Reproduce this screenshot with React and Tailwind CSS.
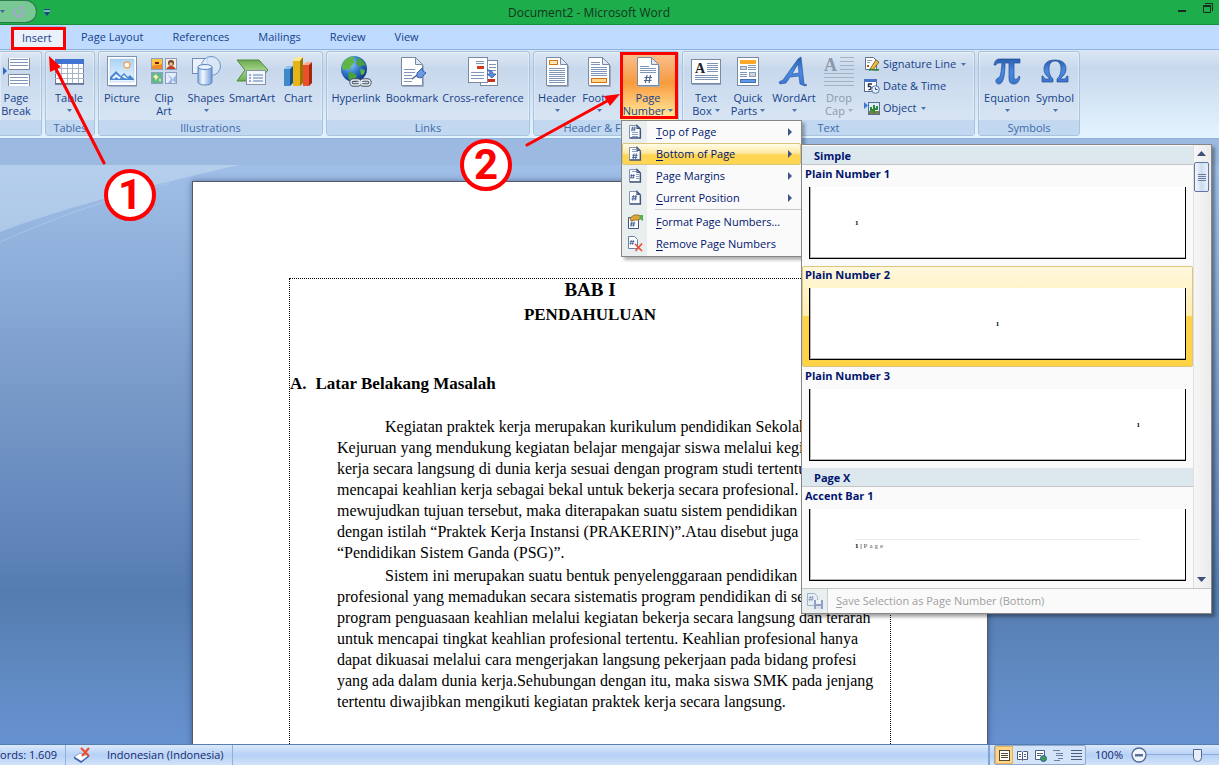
import React from "react";

const Caret = ({ className = "text-[#4a74ae]" }) => (
  <svg viewBox="0 0 5 3" className={`inline-block h-[3px] w-[5px] shrink-0 ${className}`} fill="currentColor" aria-hidden="true">
    <path d="M0 0h5L2.5 3z" />
  </svg>
);

const Svg = ({ children, size = "h-[32px] w-[32px]", box = "0 0 32 32" }) => (
  <svg viewBox={box} className={`${size} shrink-0`} fill="none" aria-hidden="true">
    {children}
  </svg>
);

const Lines = ({ x1, x2, ys, stroke = "#7f96b8" }) => (
  <path d={ys.map((y) => `M${x1} ${y}H${x2}`).join("")} stroke={stroke} strokeWidth="1" />
);

const Sheet = ({ x = 5, y = 1, w = 21, h = 29, fold = 7, stroke = "#7b8aa3" }) => (
  <g>
    <path d={`M${x + 1} ${y + h + 1}h${w}v-${h - fold}`} stroke="#9dabc0" strokeWidth="1" />
    <path d={`M${x} ${y}h${w - fold}l${fold} ${fold}v${h - fold}h-${w}z`} fill="#fff" stroke={stroke} />
    <path d={`M${x + w - fold} ${y}v${fold}h${fold}z`} fill="#dfe7f2" stroke={stroke} />
  </g>
);

const PageBreakIcon = () => (
  <Svg>
    <path d="M8.500 2v11.500h21V2" fill="#fff" stroke="#7b8ba6" />
    <Lines x1={10} x2={28} ys={[3.5, 6.5, 9.5]} />
    <path d="M8.500 30V18.500h21V30" fill="#fff" stroke="#7b8ba6" />
    <Lines x1={10} x2={28} ys={[21.5, 24.5, 27.5]} />
    <path d="M3 11v8l4-4z" fill="#2f69c8" />
  </Svg>
);

const TableIcon = () => (
  <Svg>
    <rect x="2.500" y="3.500" width="28" height="24" fill="#fff" stroke="#6d7f9f" />
    <rect x="2" y="3" width="29" height="5" fill="#3f74d4" />
    <path d="M2 12.500h29M2 17.500h29M2 22.500h29M8.500 8v20M14.500 8v20M19.500 8v20M25.500 8v20" stroke="#a7b3c8" />
    <path d="M2 28h29" stroke="#5d6f8f" strokeWidth="1.500" />
  </Svg>
);

const PictureIcon = () => (
  <Svg>
    <defs>
      <linearGradient id="sky" x1="0" y1="0" x2="0" y2="1">
        <stop offset="0" stopColor="#a9d3f5" />
        <stop offset="1" stopColor="#eaf6ff" />
      </linearGradient>
    </defs>
    <rect x="1.500" y="0.500" width="29" height="29" fill="#fff" stroke="#7a93b4" />
    <rect x="4" y="3" width="24" height="23" fill="url(#sky)" stroke="#a9c3e0" strokeWidth="0.500" />
    <circle cx="21" cy="9" r="3" fill="#fff" stroke="#f3a35c" strokeWidth="1.300" />
    <path d="M4 24v-3l6-6 5 5 3-3 4 4 2-2 4 4v1z" fill="#4a86cf" />
    <path d="M6 22l4-4 5 4-2 1-3-2-2 2zM16 21l2-2 4 4z" fill="#eef6ff" />
    <path d="M3 30.500h28" stroke="#a4b4ca" />
  </Svg>
);

const ClipArtIcon = () => (
  <Svg>
    <rect x="3.500" y="2.500" width="11" height="11" fill="#ffc33d" stroke="#8b9fc0" />
    <path d="M4 10c3-2 6 0 10-2v5H4z" fill="#ee8a2a" />
    <rect x="7" y="6" width="4" height="2" fill="#7a1c10" />
    <rect x="17.500" y="2.500" width="11" height="11" fill="#f7eadb" stroke="#8b9fc0" />
    <path d="M18.500 13c1-4 8-4 9 0z" fill="#c33b22" />
    <circle cx="23" cy="7" r="3" fill="#6d4630" />
    <circle cx="23" cy="8" r="1.700" fill="#f2c193" />
    <rect x="3.500" y="16.500" width="11" height="11" fill="#63b98a" stroke="#8b9fc0" />
    <path d="M6 20l2-2 1 2 2 1-2 1-1 3-1-3-2-1zM11 24l1-2 1 2-1 2z" fill="#fff0a8" />
    <rect x="17.500" y="16.500" width="11" height="11" fill="#e4ecfb" stroke="#8b9fc0" />
    <path d="M19 18l5 4v5h-4l3-4zM28 19l-4 5 4 3z" fill="#9db6e8" />
  </Svg>
);

const ShapesIcon = () => (
  <Svg>
    <defs>
      <linearGradient id="cyl" x1="0" x2="1" y1="0" y2="0">
        <stop offset="0" stopColor="#8fb4e6" />
        <stop offset="0.350" stopColor="#f3f9ff" />
        <stop offset="1" stopColor="#6d99d9" />
      </linearGradient>
    </defs>
    <rect x="2.500" y="2.500" width="15" height="15" fill="#e9f2fd" stroke="#6f8db8" />
    <circle cx="21" cy="10" r="9.500" fill="#dbe9fa" fillOpacity="0.800" stroke="#6f94c8" />
    <path d="M8 11v15c0 4 14 4 14 0V11z" fill="url(#cyl)" stroke="#5d84bb" />
    <ellipse cx="15" cy="11" rx="7" ry="2.500" fill="#e9f3ff" stroke="#5d84bb" />
  </Svg>
);

const SmartArtIcon = () => (
  <Svg>
    <defs>
      <linearGradient id="smart" x1="0" y1="0" x2="0" y2="1">
        <stop offset="0" stopColor="#6aa84f" />
        <stop offset="0.500" stopColor="#a5d488" />
        <stop offset="1" stopColor="#6aad4c" />
      </linearGradient>
    </defs>
    <path d="M1 4h22l9 10-9 11H1l8-11z" fill="url(#smart)" stroke="#508a3a" />
    <rect x="10.500" y="14.500" width="19" height="14" fill="#f3f6fa" stroke="#8493a8" />
    <path d="M13 19h2M13 22h2M13 25h2" stroke="#3f66a8" />
    <path d="M17 19h10M17 22h10M17 25h10" stroke="#5f7eb0" />
  </Svg>
);

const ChartIcon = () => (
  <Svg>
    <path d="M2 13l3-3h6l-2 3z" fill="#8cc4ee" />
    <path d="M2 13h6v17H2z" fill="#3f8acb" />
    <path d="M8 13l3-3v17l-3 3z" fill="#174f8c" />
    <path d="M11 5l3-4h7l-3 4z" fill="#ffe98a" />
    <path d="M11 5h7v25h-7z" fill="#e6b414" />
    <path d="M18 5l3-4v26l-3 3z" fill="#9a7405" />
    <path d="M21 9l3-3h6l-3 3z" fill="#ffab8e" />
    <path d="M21 9h6v21h-6z" fill="#e8512c" />
    <path d="M27 9l3-3v21l-3 3z" fill="#a32708" />
  </Svg>
);

const HyperlinkIcon = () => (
  <Svg>
    <defs>
      <radialGradient id="globe" cx="0.350" cy="0.300" r="0.750">
        <stop offset="0" stopColor="#9ad0f8" />
        <stop offset="0.550" stopColor="#2c73c8" />
        <stop offset="1" stopColor="#0c3478" />
      </radialGradient>
    </defs>
    <circle cx="14" cy="13" r="13" fill="url(#globe)" />
    <path d="M4 5c3-4 8-5 11-4l-2 3 2 2-4 4-1 4-3-1-4 1c-2-3-1-6 1-9z" fill="#5fb548" />
    <path d="M18 2c4 1 7 5 8 8l-3-1-4 2-3-4zM9 16l5 1 3 3-4 6c-4-1-6-5-4-10z" fill="#48a13c" />
    <path d="M20 13l5 1-1 4-3 1z" fill="#58b14a" />
    <g stroke="#4d5866" strokeWidth="3.400">
      <rect x="11" y="24" width="9" height="5" rx="2.500" />
      <rect x="21" y="24" width="9" height="5" rx="2.500" />
      <path d="M17 26.500h7" />
    </g>
    <g stroke="#e3e8ee" strokeWidth="1.400">
      <rect x="11" y="24" width="9" height="5" rx="2.500" />
      <rect x="21" y="24" width="9" height="5" rx="2.500" />
      <path d="M17 26.500h7" />
    </g>
  </Svg>
);

const BookmarkIcon = () => (
  <Svg>
    <Sheet x={5.5} y={1.5} w={21} h={28} />
    <Lines x1={8} x2={19} ys={[13.5, 16.5]} />
    <Lines x1={8} x2={16} ys={[19.5, 22.5, 25.5]} />
    <path d="M16 23l9-7" stroke="#51617e" strokeWidth="1.500" />
    <path d="M21 17l5-5 1 3 3 2-5 5-4-1z" fill="#6c98e0" stroke="#3462ad" />
  </Svg>
);

const CrossRefIcon = () => (
  <Svg>
    <rect x="13.500" y="4.500" width="17" height="25" fill="#fff" stroke="#7b8aa3" />
    <Lines x1={22} x2={29} ys={[8.5, 11.5, 14.5]} />
    <rect x="20" y="23" width="8" height="3" fill="#c8321c" />
    <rect x="1.500" y="1.500" width="19" height="25" fill="#fff" stroke="#7b8aa3" />
    <Lines x1={9} x2={17} ys={[5.5, 7.5]} />
    <rect x="10" y="10" width="7" height="3" fill="#d23a20" />
    <Lines x1={4} x2={17} ys={[16.5, 19.5, 22.5]} />
    <path d="M20 14c5 0 6 2 6 4h3l-4 4-5-4h3c0-2-1-3-3-4z" fill="#5b8fdd" stroke="#2a5ba8" strokeWidth="0.800" />
  </Svg>
);

const HeaderIcon = () => (
  <Svg>
    <Sheet x={5.5} y={1.5} w={21} h={28} />
    <rect x="8.500" y="4.500" width="8" height="4" fill="#ffe9b8" stroke="#d3740f" />
    <Lines x1={8} x2={24} ys={[12.5, 14.5, 16.5, 18.5, 20.5, 22.5, 24.5, 26.5]} />
  </Svg>
);

const FooterIcon = () => (
  <Svg>
    <Sheet x={5.5} y={1.5} w={21} h={28} />
    <Lines x1={8} x2={17} ys={[6.5, 8.5]} />
    <Lines x1={8} x2={24} ys={[11.5, 13.5, 15.5, 17.5, 19.5]} />
    <rect x="8.500" y="22.500" width="15" height="4" fill="#ffd58c" stroke="#d3740f" />
  </Svg>
);

const Hash = ({ x, y, s = 1, stroke = "#4a6289" }) => (
  <path transform={`translate(${x} ${y}) scale(${s})`} d="M3 0L1.500 8M6.500 0L5 8M0.500 2.500h7.500M0 5.500h7.500" stroke={stroke} strokeWidth="1.200" />
);

const PageNumberIcon = () => (
  <Svg>
    <Sheet x={5.5} y={1.5} w={21} h={28} />
    <Lines x1={8} x2={17} ys={[10.5]} />
    <Lines x1={8} x2={24} ys={[12.5, 14.5, 16.5]} />
    <Hash x={12} y={19} />
  </Svg>
);

const TextBoxIcon = () => (
  <Svg>
    <rect x="1.500" y="3.500" width="29" height="24" fill="#fff" stroke="#7b8aa3" />
    <text x="5" y="17" fontFamily="Liberation Serif, serif" fontWeight="700" fontSize="14" fill="#1d1d24">A</text>
    <Lines x1={17} x2={28} ys={[7.5, 9.5, 11.5, 13.5, 15.5]} />
    <Lines x1={5} x2={28} ys={[19.5, 21.5, 23.5]} />
    <path d="M2 28.500h29" stroke="#8ba0bd" />
  </Svg>
);

const QuickPartsIcon = () => (
  <Svg>
    <rect x="5.500" y="1.500" width="21" height="28" fill="#fff" stroke="#7b8aa3" />
    <rect x="8" y="4" width="16" height="4" fill="#ffa928" />
    <rect x="8.500" y="10.500" width="6" height="3" fill="#c9d4e4" stroke="#8d9db6" />
    <Lines x1={16} x2={24} ys={[9.5, 11.5, 13.5]} />
    <Lines x1={8} x2={15} ys={[16.5, 18.5, 20.5]} />
    <rect x="17.500" y="16.500" width="6" height="4" fill="#c9d4e4" stroke="#8d9db6" />
    <rect x="8.500" y="23.500" width="15" height="3" fill="#5f9be4" stroke="#3f70b6" />
  </Svg>
);

const BlueDefs = () => (
  <defs>
    <linearGradient id="bluetext" x1="0" y1="0" x2="0" y2="1">
      <stop offset="0" stopColor="#2a5fae" />
      <stop offset="0.500" stopColor="#4c8ae0" />
      <stop offset="1" stopColor="#3a76d0" />
    </linearGradient>
  </defs>
);

const WordArtIcon = () => (
  <Svg>
    <BlueDefs />
    <path d="M23 1L26 28l3 1-2 1-5-2-1-8-9 1-4 6-6 1-1-2 4-2L20 3z" fill="url(#bluetext)" stroke="#2a5aa6" strokeWidth="0.700" />
    <path d="M20 8l1 9-7 1z" fill="#d3e0f1" stroke="#2a5aa6" strokeWidth="0.700" />
  </Svg>
);

const DropCapIcon = () => (
  <Svg>
    <text x="1" y="15" fontFamily="Liberation Serif, serif" fontWeight="700" fontSize="18" fill="#8b98aa">A</text>
    <Lines x1={17} x2={31} ys={[1.5, 5.5, 9.5, 13.5]} stroke="#a5b0c0" />
    <Lines x1={1} x2={31} ys={[17.5, 21.5, 25.5, 29.5]} stroke="#a5b0c0" />
  </Svg>
);

const PiIcon = () => (
  <Svg>
    <BlueDefs />
    <path d="M3 9c1-5 3-6 6-6h20v4h-6v13c0 4 2 4 4 2l1-2 1 1c-1 5-3 7-6 7-4 0-5-2-5-7V7h-4c0 9-1 21-6 21-4 0-4-5-1-6 3-1 3-6 4-15-4 0-5 0-6 2z" fill="url(#bluetext)" stroke="#1f4f98" strokeWidth="0.700" />
  </Svg>
);

const OmegaIcon = () => (
  <Svg>
    <BlueDefs />
    <path d="M3 20h1l2 3h5c-3-3-6-5-6-10C5 7 9 4 16 4s11 3 11 9c0 5-3 7-6 10h5l2-3h1v6H18v-3c3-3 4-6 4-10 0-5-2-8-6-8s-6 3-6 8c0 4 1 7 4 10v3H3z" fill="url(#bluetext)" stroke="#1f4f98" strokeWidth="0.700" />
  </Svg>
);

const SmallSvg = ({ children }) => <Svg size="h-[16px] w-[16px]" box="0 0 16 16">{children}</Svg>;

const SignatureIcon = () => (
  <SmallSvg>
    <path d="M1.500 1.500h8l3 3v9h-11z" fill="#fff" stroke="#5e6f8c" />
    <path d="M3 4.500h5M3 6.500h3" stroke="#8fa0b8" />
    <path d="M3 9l2 2M5 9l-2 2" stroke="#c9472e" />
    <path d="M6 13l6-9 3 2-6 8z" fill="#f0b93a" stroke="#6b5220" strokeWidth="0.800" />
    <path d="M5 14.500c3-3 5 1 10-1" stroke="#2f7d35" strokeWidth="1.500" />
  </SmallSvg>
);

const DateIcon = () => (
  <SmallSvg>
    <rect x="0.500" y="1.500" width="12" height="12" fill="#fff" stroke="#516a96" />
    <rect x="0" y="1" width="13" height="3" fill="#4773c4" />
    <path d="M8 6H4.500v2.500c3-1 4 3 0 3.200" stroke="#24304a" strokeWidth="1.400" />
    <circle cx="11.500" cy="11.500" r="3.800" fill="#e4eefb" stroke="#5b77a8" />
    <path d="M11.500 9.500v2h2" stroke="#344d7d" />
  </SmallSvg>
);

const ObjectIcon = () => (
  <SmallSvg>
    <rect x="4.500" y="2.500" width="11" height="12" fill="#dcebf8" stroke="#566f96" />
    <path d="M5 14v-3h10v3z" fill="#7a7f45" />
    <path d="M10 13V5M7 7v3h3M13 6v3h-3" stroke="#2d8a36" strokeWidth="2" />
    <path d="M0 2v7l4-3.500z" fill="#3a78d8" />
  </SmallSvg>
);

const MiniSheet = ({ children, x = 2.5 }) => (
  <g>
    <path d={`M${x} 1.500h7.500l3 3v9h-10.500z`} fill="#fdfdff" stroke="#8293b3" />
    <path d={`M${x + 7.5} 1.500v3h3zM${x} 14.200h11v-9`} stroke="#41557c" strokeWidth="1.200" />
    {children}
  </g>
);

const TopIcon = () => (
  <SmallSvg>
    <MiniSheet>
      <Hash x={4} y={2.5} s={0.6} stroke="#2f4f86" />
      <path d="M5 8.500h6M5 10.500h6M5 12.500h6" stroke="#8b9fc2" />
    </MiniSheet>
  </SmallSvg>
);
const BottomIcon = () => (
  <SmallSvg>
    <MiniSheet>
      <path d="M5 3.500h4M5 5.500h6" stroke="#8b9fc2" />
      <Hash x={5} y={7.5} s={0.7} stroke="#2f4f86" />
    </MiniSheet>
  </SmallSvg>
);
const MarginIcon = () => (
  <SmallSvg>
    <MiniSheet>
      <Hash x={3} y={6} s={0.6} stroke="#2f4f86" />
      <path d="M9 6.500h3M9 8.500h3M9 10.500h3M5 3.500h4" stroke="#8b9fc2" />
    </MiniSheet>
  </SmallSvg>
);
const CurrentIcon = () => (
  <SmallSvg>
    <MiniSheet>
      <Hash x={4.5} y={5} s={0.7} stroke="#2f4f86" />
    </MiniSheet>
  </SmallSvg>
);
const FormatIcon = () => (
  <SmallSvg>
    <path d="M1.500 3.500h10v11h-10z" fill="#fdfdff" stroke="#41557c" />
    <Hash x={3} y={7.5} s={0.65} stroke="#2f4f86" />
    <path d="M3 4l4-3 5 0 2 2-2 3H8L4 7z" fill="#dba63a" stroke="#86631b" strokeWidth="0.800" />
    <path d="M12.500 1h3.500v6l-3.500-2z" fill="#59b04f" />
  </SmallSvg>
);
const RemoveIcon = () => (
  <SmallSvg>
    <path d="M1.500 0.500h6l3 3v9h-9z" fill="#fdfdff" stroke="#6c80a4" />
    <Hash x={2.5} y={4} s={0.6} stroke="#2f4f86" />
    <path d="M8 8l7 7M15 7.500L8.500 15" stroke="#ef4f35" strokeWidth="1.700" />
  </SmallSvg>
);
const SaveIcon = () => (
  <SmallSvg>
    <path d="M0.500 0.500h7l3 3v9h-10z" fill="#e9eef6" stroke="#a3b2cc" />
    <Hash x={1.5} y={3} s={0.65} stroke="#8296ba" />
    <rect x="7" y="7" width="9" height="9" fill="#8fa2c4" />
    <rect x="9" y="7" width="5" height="4" fill="#eef2f8" />
    <rect x="9" y="13" width="5" height="3" fill="#d9e0ec" />
  </SmallSvg>
);

const BigButton = ({ icon, lines, width, caret, disabled, className = "" }) => (
  <button
    type="button"
    disabled={disabled}
    className={`flex shrink-0 flex-col items-center whitespace-nowrap text-[11px] leading-[13px] ${width} ${disabled ? "text-[#8d99aa]" : "text-[#15428b]"} ${className}`}
  >
    {icon}
    <span className="mt-[3px]">{lines[0]}</span>
    <span className="flex h-[13px] items-center gap-[3px]">
      {lines[1]}
      {caret && <Caret className={disabled ? "text-[#a8b2bf]" : "text-[#4a74ae]"} />}
    </span>
  </button>
);

const Group = ({ label, width, children, className = "" }) => (
  <section
    className={`flex shrink-0 flex-col rounded-[3px] border border-[#a9c2de] bg-linear-to-b from-[#dce7f3] from-0% via-[#c8d8ec] via-20% to-[#dbe8f5] shadow-[inset_0_0_0_1px_rgba(255,255,255,0.35)] ${width} ${className}`}
  >
    <div className="flex flex-1 pl-[2px] pt-[4px]">{children}</div>
    <h2 className="h-[15px] overflow-hidden whitespace-nowrap bg-[#c1d8f0] text-center text-[11px] leading-[15px] text-[#3e6aaa]">{label}</h2>
  </section>
);

const SmallButton = ({ icon, label, caret }) => (
  <button type="button" className="flex h-[22px] items-center gap-[3px] whitespace-nowrap text-[11px] text-[#15428b]">
    {icon}
    <span>{label}</span>
    {caret && <Caret className="ml-[2px] text-[#4a74ae]" />}
  </button>
);

const menuItems = [
  { key: "T", rest: "op of Page", icon: <TopIcon />, sub: true },
  { key: "B", rest: "ottom of Page", icon: <BottomIcon />, sub: true, active: true },
  { key: "P", rest: "age Margins", icon: <MarginIcon />, sub: true },
  { key: "C", rest: "urrent Position", icon: <CurrentIcon />, sub: true },
  { key: "F", rest: "ormat Page Numbers...", icon: <FormatIcon />, divider: true },
  { key: "R", rest: "emove Page Numbers", icon: <RemoveIcon /> },
];

const Menu = () => (
  <div role="menu" className="absolute left-[621px] top-[120px] w-[181px] border border-[#868686] bg-[#fafafa] bg-linear-to-r from-[#e9eeee] from-[25px] to-[#fafafa] to-[25px] pb-px shadow-[3px_3px_3px_rgba(0,0,0,0.3)]">
    {menuItems.map((m) => (
      <React.Fragment key={m.key}>
        {m.divider && <div className="mb-px ml-[33px] h-px bg-[#c5c5c5]" />}
        <button
          type="button"
          role="menuitem"
          className={`flex h-[22px] w-full items-center border pl-[4px] pr-[8px] text-[11px] text-[#00156e] ${
            m.active ? "rounded-[2px] border-[#d8c47c] bg-linear-to-b from-[#fffce9] from-0% via-[#ffe9a0] via-45% to-[#ffd552] to-55%" : "border-transparent"
          }`}
        >
          {m.icon}
          <span className="ml-[13px] flex-1 whitespace-nowrap text-left">
            <span className="underline underline-offset-2">{m.key}</span>
            {m.rest}
          </span>
          {m.sub && (
            <svg viewBox="0 0 4 8" className="h-[8px] w-[4px]" fill="#3f5487" aria-hidden="true">
              <path d="M0 0l4 4-4 4z" />
            </svg>
          )}
        </button>
      </React.Fragment>
    ))}
  </div>
);

const GalleryHeading = ({ children }) => (
  <h3 className="h-[19px] border-b border-[#c5c5c5] bg-[#dde7ee] pl-[12px] text-[11px] font-bold leading-[19px] text-[#00156e]">{children}</h3>
);

const GalleryItem = ({ label, active, children }) => (
  <button
    type="button"
    className={`flex h-[101px] w-full flex-col justify-start rounded-[2px] border pl-[2px] pr-[6px] text-left ${
      active ? "border-[#dcc57c] bg-linear-to-b from-[#fff8dc] from-0% via-[#ffeeb0] via-50% to-[#ffd346] to-50%" : "border-transparent"
    }`}
  >
    <span className="h-[16px] text-[11px] font-bold leading-[16px] text-[#00156e]">{label}</span>
    <span className="ml-[4px] mt-[5px] flex h-[72px] items-center self-stretch border-b border-l border-r border-black bg-white px-[45px] shadow-[inset_1px_-1px_0_#b5b5b5]">
      {children}
    </span>
  </button>
);

const Mark = ({ children, className = "" }) => (
  <span className={`block w-full font-['Liberation_Serif',serif] text-[7px] font-bold leading-[8px] text-black ${className}`}>{children}</span>
);

const Gallery = () => (
  <div className="absolute left-[801px] top-[144px] w-[411px] border border-[#868686] bg-[#fafafa] shadow-[3px_3px_3px_rgba(0,0,0,0.35)]">
    <div className="flex">
      <div className="flex-1 pt-px">
        <GalleryHeading>Simple</GalleryHeading>
        <GalleryItem label="Plain Number 1"><Mark>1</Mark></GalleryItem>
        <GalleryItem label="Plain Number 2" active><Mark className="text-center">1</Mark></GalleryItem>
        <GalleryItem label="Plain Number 3"><Mark className="text-right">1</Mark></GalleryItem>
        <GalleryHeading>Page X</GalleryHeading>
        <GalleryItem label="Accent Bar 1">
          <Mark className="border-t border-[#ececec] pt-[2px]">
            1 | <span className="font-normal tracking-[2px] text-[#555]">Page</span>
          </Mark>
        </GalleryItem>
      </div>
      <div className="flex w-[18px] flex-col border-l border-[#e0e0e0] bg-linear-to-r from-[#f6f6f6] to-[#ebebeb]">
        <button type="button" aria-label="Scroll up" className="flex h-[17px] w-[15px] items-center justify-center">
          <svg viewBox="0 0 9 5" className="h-[5px] w-[9px]" fill="#3c4f7b"><path d="M4.500 0L9 5H0z" /></svg>
        </button>
        <div className="flex h-[30px] w-[15px] flex-col items-center justify-center gap-px rounded-[2px] border border-[#5f76a3] bg-linear-to-r from-[#f3f7fc] via-[#cfdcef] to-[#e9f0f9]">
          <span className="h-px w-[8px] bg-[#6b7c9c]" />
          <span className="h-px w-[8px] bg-[#6b7c9c]" />
          <span className="h-px w-[8px] bg-[#6b7c9c]" />
          <span className="h-px w-[8px] bg-[#6b7c9c]" />
        </div>
        <div className="flex-1" />
        <button type="button" aria-label="Scroll down" className="flex h-[17px] w-[15px] items-center justify-center">
          <svg viewBox="0 0 9 5" className="h-[5px] w-[9px]" fill="#3c4f7b"><path d="M0 0h9L4.500 5z" /></svg>
        </button>
      </div>
    </div>
    <button type="button" disabled className="flex h-[25px] w-full items-center border-t border-[#c5c5c5] text-[11px] text-[#a0a0a0]">
      <span className="flex h-full w-[26px] items-center justify-center border-r border-[#c9cfd2] bg-[#e9eeee]"><SaveIcon /></span>
      <span className="ml-[8px] whitespace-nowrap"><span className="underline underline-offset-2">S</span>ave Selection as Page Number (Bottom)</span>
    </button>
  </div>
);

const paragraphs = [
  [
    "Kegiatan praktek kerja merupakan kurikulum pendidikan Sekolah",
    "Kejuruan yang mendukung kegiatan belajar mengajar siswa melalui kegiatan",
    "kerja secara langsung di dunia kerja sesuai dengan program studi tertentu",
    "mencapai keahlian kerja sebagai bekal untuk bekerja secara profesional.",
    "mewujudkan tujuan tersebut, maka diterapakan suatu sistem pendidikan",
    "dengan istilah “Praktek Kerja Instansi (PRAKERIN)”.Atau disebut juga",
    "“Pendidikan Sistem Ganda (PSG)”.",
  ],
  [
    "Sistem ini merupakan suatu bentuk penyelenggaraan pendidikan keahlian",
    "profesional yang memadukan secara sistematis program pendidikan di sekolah",
    "program penguasaan keahlian melalui kegiatan bekerja secara langsung dan terarah",
    "untuk mencapai tingkat keahlian profesional tertentu. Keahlian profesional hanya",
    "dapat dikuasai melalui cara mengerjakan langsung pekerjaan pada bidang profesi",
    "yang ada dalam dunia kerja.Sehubungan dengan itu, maka siswa SMK pada jenjang",
    "tertentu diwajibkan mengikuti kegiatan praktek kerja secara langsung.",
  ],
];

const DocumentPage = () => (
  <article className="relative ml-[192px] mt-[42px] h-[900px] w-[796px] shrink-0 border border-[#555a66] bg-white px-[96px] pt-[96px] font-['Liberation_Serif',serif] text-black shadow-[0_0_6px_rgba(20,40,80,0.5)]">
    <div className="h-[800px] border border-dotted border-black">
      <h1 className="text-center text-[19px] font-bold leading-[22px]">BAB I</h1>
      <p className="mt-[2px] text-center text-[17px] font-bold leading-[24px]">PENDAHULUAN</p>
      <h2 className="mt-[46px] flex gap-[9px] text-[17px] font-bold leading-[22px]"><span>A.</span><span>Latar Belakang Masalah</span></h2>
      <div className="mt-[21px] flex flex-col gap-[2px] pl-[47px] text-[16px] leading-[21px]">
        {paragraphs.map((p) => (
          <p key={p[0]} className="indent-[48px]">
            {p.map((l) => (
              <React.Fragment key={l}><span className="whitespace-nowrap">{l}</span><br /></React.Fragment>
            ))}
          </p>
        ))}
      </div>
    </div>
  </article>
);

const ViewButton = ({ label, active, children }) => (
  <button type="button" aria-label={label} className={`flex h-[18px] w-[18px] items-center justify-center ${active ? "bg-[#ffd58a] shadow-[inset_0_0_0_1px_#e6b25a]" : ""}`}>
    <svg viewBox="0 0 13 13" className="h-[13px] w-[13px]" fill="none">{children}</svg>
  </button>
);

const StatusBar = () => (
  <footer className="flex h-[21px] shrink-0 items-center overflow-hidden whitespace-nowrap border-t border-[#567db1] bg-linear-to-b from-[#dbe9fb] from-0% via-[#b5d1f6] via-50% to-[#d3e3fa] text-[11px] text-[#15286c]">
    <div className="flex w-[57px] justify-end overflow-hidden"><span>Words: 1.609</span></div>
    <div className="ml-[8px] h-full w-px bg-[#8eb0dc]" />
    <button type="button" aria-label="Proofing" className="ml-[8px] flex">
      <Svg size="h-[16px] w-[16px]" box="0 0 16 16">
        <path d="M0 10l6-4 4 2 5 0-7 7z" fill="#fff" stroke="#8c9fc8" />
        <path d="M0 10.500l7 4.500 8-6" stroke="#3f62ae" strokeWidth="1.500" />
        <path d="M7 1l8 8M15 1L8 9" stroke="#f04a28" strokeWidth="2" />
      </Svg>
    </button>
    <span className="ml-[17px]">Indonesian (Indonesia)</span>
    <div className="ml-[8px] h-full w-px bg-[#8eb0dc]" />
    <div className="flex-1" />
    <div className="mr-[4px] h-full w-[2px] bg-[#7ea4d8]" />
    <div className="flex rounded-[2px] border border-[#8fa9cf] bg-[#d3e3f8]">
      <ViewButton label="Print layout" active>
        <rect x="1.500" y="1.500" width="10" height="10" fill="#fff" stroke="#5b4a30" />
        <path d="M3 4.500h7M3 6.500h7M3 8.500h7" stroke="#5b4a30" />
      </ViewButton>
      <ViewButton label="Full screen reading">
        <path d="M1.500 2.500h4l1 1 1-1h4v8h-4l-1 1-1-1h-4zM6.500 3v8" fill="#fff" stroke="#4b5d80" />
        <path d="M3 5.500h2M3 7.500h2M8 5.500h2M8 7.500h2" stroke="#4b5d80" />
      </ViewButton>
      <ViewButton label="Web layout">
        <path d="M1.500 1.500h9v9h-9z" fill="#fff" stroke="#4b5d80" />
        <path d="M3 4.500h6M3 6.500h4" stroke="#4b5d80" />
        <circle cx="9.500" cy="9.500" r="3" fill="#3f9a54" stroke="#2a5fa0" />
      </ViewButton>
      <ViewButton label="Outline">
        <path d="M1 1.500h7M4 4.500h7M4 6.500h7M6 9.500h5M2 11.500h6" stroke="#6a7ea4" />
      </ViewButton>
      <ViewButton label="Draft">
        <path d="M1 1.500h11M1 4.500h11M1 7.500h11M1 10.500h11" stroke="#4b5d80" />
      </ViewButton>
    </div>
    <span className="ml-[9px]">100%</span>
    <button type="button" aria-label="Zoom out" className="ml-[8px] flex">
      <svg viewBox="0 0 16 16" className="h-[16px] w-[16px]" fill="none">
        <circle cx="8" cy="8" r="7" fill="#f1f6fd" stroke="#55688f" strokeWidth="1.300" />
        <rect x="4" y="7" width="8" height="2.500" fill="#5d6f94" />
      </svg>
    </button>
    <div className="flex h-full w-[72px] items-center overflow-hidden">
      <input
        type="range"
        aria-label="Zoom"
        defaultValue="50"
        className="h-[14px] w-[100px] shrink-0 appearance-none bg-linear-to-b from-transparent from-[6px] via-[#6782b2] via-[6px] to-transparent to-[7px] [&::-webkit-slider-thumb]:h-[13px] [&::-webkit-slider-thumb]:w-[9px] [&::-webkit-slider-thumb]:appearance-none [&::-webkit-slider-thumb]:rounded-b-[5px] [&::-webkit-slider-thumb]:border [&::-webkit-slider-thumb]:border-[#55688f] [&::-webkit-slider-thumb]:bg-[#e6eefa]"
      />
    </div>
  </footer>
);

const TitleBar = () => (
  <header className="flex h-[25px] shrink-0 border-b border-[#178f3d] bg-[#1dad4b]">
    <div className="flex h-[23px] w-[37px] items-center gap-[8px] overflow-hidden rounded-r-full border border-l-0 border-[#2b7a47] bg-[#77c893]">
      <Caret className="text-[#47639b]" />
      <svg viewBox="0 0 14 14" className="h-[13px] w-[13px] shrink-0" fill="none" stroke="#a3a8cc" strokeWidth="2.600" aria-hidden="true">
        <path d="M3 4a5 5 0 1 0 8 1" />
        <path d="M6.500 1.500v5L12.500 1.500z" fill="#a3a8cc" stroke="none" />
      </svg>
    </div>
    <button type="button" aria-label="Customize toolbar" className="ml-[7px] flex items-center">
      <svg viewBox="0 0 6 7" className="h-[7px] w-[6px]"><path d="M0 0h6v1.500H0zM0 3h6L3 7z" fill="#1c3f8c" /><path d="M0 1.500h6v1H0z" fill="#d8f0ff" /></svg>
    </button>
    <h1 className="flex-1 pr-[50px] text-center text-[12px] leading-[26px] text-[#12351f]">Document2 - Microsoft Word</h1>
    <div className="flex gap-[17px] pr-[6px]">
      <button type="button" aria-label="Minimize" className="flex w-[8px] items-start pt-[10px]"><span className="h-[2px] w-full bg-[#1f2a22]" /></button>
      <button type="button" aria-label="Restore" className="flex items-start pt-[3px]">
        <svg viewBox="0 0 10 10" className="h-[10px] w-[10px]" fill="none" stroke="#1f2a22"><path d="M2 0.500h7.500V8M0.500 3h7v6.500h-7z" /><path d="M0 3h8" strokeWidth="2" /></svg>
      </button>
    </div>
  </header>
);

const Badge = ({ n, className }) => (
  <div className={`absolute flex h-[52px] w-[52px] items-center justify-center rounded-full border-[4px] border-[#ff0000] bg-white font-[Roboto,sans-serif] text-[42px] font-bold leading-none text-[#ff0000] ${className}`}>{n}</div>
);

export default function App() {
  return (
    <div className="relative flex h-screen flex-col overflow-hidden bg-[#9bb9e1] font-['Open_Sans','Noto_Sans',sans-serif]">
      <TitleBar />
      <nav className="flex h-[24px] shrink-0 items-center bg-[#bfdbff] pl-[11px] pt-px text-[11px] text-[#15428b]">
        <a href="#insert" className="flex h-full w-[55px] items-center rounded-t-[3px] border border-b-0 border-[#9bbce6] bg-[#eaf1fa] pl-[10px]">Insert</a>
        <div className="ml-[15px] flex gap-[29px] whitespace-nowrap">
          <a href="#layout">Page Layout</a>
          <a href="#references">References</a>
          <a href="#mailings">Mailings</a>
          <a href="#review">Review</a>
          <a href="#view">View</a>
        </div>
      </nav>
      <div className="flex h-[90px] shrink-0 gap-[3px] border-b border-t border-b-[#8fb2de] border-t-[#8db2e3] bg-linear-to-b from-[#dce7f4] from-0% via-[#c7d8ed] via-20% to-[#e4f4ff] pb-[2px] pt-px">
        <Group label="" width="w-[42px]" className="rounded-l-none border-l-0">
          <BigButton icon={<PageBreakIcon />} lines={["Page", "Break"]} width="w-[32px]" className="-ml-[2px]" />
        </Group>
        <Group label="Tables" width="w-[50px]">
          <BigButton icon={<TableIcon />} lines={["Table"]} caret width="w-[42px]" />
        </Group>
        <Group label="Illustrations" width="w-[225px]">
          <BigButton icon={<PictureIcon />} lines={["Picture"]} width="w-[42px]" />
          <BigButton icon={<ClipArtIcon />} lines={["Clip", "Art"]} width="w-[42px]" />
          <BigButton icon={<ShapesIcon />} lines={["Shapes"]} caret width="w-[42px]" />
          <BigButton icon={<SmartArtIcon />} lines={["SmartArt"]} width="w-[50px]" />
          <BigButton icon={<ChartIcon />} lines={["Chart"]} width="w-[42px]" />
        </Group>
        <Group label="Links" width="w-[204px]">
          <BigButton icon={<HyperlinkIcon />} lines={["Hyperlink"]} width="w-[54px]" />
          <BigButton icon={<BookmarkIcon />} lines={["Bookmark"]} width="w-[58px]" />
          <BigButton icon={<CrossRefIcon />} lines={["Cross-reference"]} width="w-[84px]" />
        </Group>
        <Group label="Header & Footer" width="w-[146px]">
          <BigButton icon={<HeaderIcon />} lines={["Header"]} caret width="w-[42px]" />
          <BigButton icon={<FooterIcon />} lines={["Footer"]} caret width="w-[42px]" />
          <BigButton
            icon={<PageNumberIcon />}
            lines={["Page", "Number"]}
            caret
            width="w-[56px]"
            className="-mt-[4px] bg-linear-to-b from-[#f8c291] from-0% via-[#f79a3c] via-45% to-[#fff0a0] pt-[4px]"
          />
        </Group>
        <Group label="Text" width="w-[293px]">
          <BigButton icon={<TextBoxIcon />} lines={["Text", "Box"]} caret width="w-[42px]" />
          <BigButton icon={<QuickPartsIcon />} lines={["Quick", "Parts"]} caret width="w-[42px]" />
          <BigButton icon={<WordArtIcon />} lines={["WordArt"]} caret width="w-[50px]" />
          <BigButton icon={<DropCapIcon />} lines={["Drop", "Cap"]} caret disabled width="w-[40px]" />
          <div className="-mt-[3px] ml-[5px] flex flex-col items-start">
            <SmallButton icon={<SignatureIcon />} label="Signature Line" caret />
            <SmallButton icon={<DateIcon />} label="Date & Time" />
            <SmallButton icon={<ObjectIcon />} label="Object" caret />
          </div>
        </Group>
        <Group label="Symbols" width="w-[102px]">
          <BigButton icon={<PiIcon />} lines={["Equation"]} caret width="w-[52px]" />
          <BigButton icon={<OmegaIcon />} lines={["Symbol"]} caret width="w-[44px]" />
        </Group>
      </div>
      <main className="relative flex min-h-0 flex-1 flex-col overflow-hidden bg-[linear-gradient(to_bottom,#9bb9e1_0px,#9bb9e1_26px,#a0bfe8_26px,#7799c8_43%,#6388bd_63%,#557cb0_75%,#5f89c0_88%,#6792d1_100%)]">
        <svg className="absolute left-0 top-[26px] h-[90px] w-[250px]" viewBox="0 0 250 90" fill="none" aria-hidden="true">
          <path d="M0 0H239C150 20 60 44 0 67z" fill="#d5e5f5" fillOpacity="0.400" />
          <path d="M0 77C60 50 110 34 170 18" stroke="#bcd2ee" strokeOpacity="0.500" />
        </svg>
        <DocumentPage />
      </main>
      <StatusBar />
      <Menu />
      <Gallery />
      <svg className="pointer-events-none absolute left-0 top-0 h-[200px] w-[700px]" viewBox="0 0 700 200" fill="none" aria-hidden="true">
        <rect x="12.500" y="28.500" width="52" height="20" stroke="#ff0000" strokeWidth="3" />
        <rect x="621.500" y="53.500" width="55" height="64" stroke="#ff0000" strokeWidth="3" />
        <path d="M104 163L55 67M527 145L609 100" stroke="#ff0000" strokeWidth="3" strokeLinecap="round" />
        <path d="M49 56l12 11-11 5zM620 94l-10 12-6-10z" fill="#ff0000" />
      </svg>
      <Badge n="1" className="left-[104px] top-[169px]" />
      <Badge n="2" className="left-[460px] top-[139px]" />
    </div>
  );
}
